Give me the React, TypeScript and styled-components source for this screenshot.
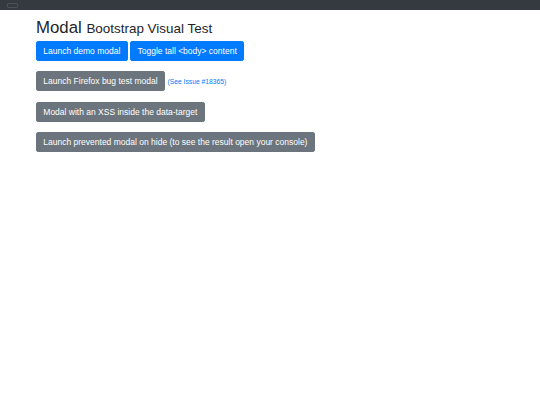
import styled, { createGlobalStyle } from "styled-components";

const GlobalStyle = createGlobalStyle`
  html, body {
    margin: 0;
    padding: 0;
    background: #fff;
  }
  body {
    font-family: "Liberation Sans", Arial, sans-serif;
    color: #212529;
  }
`;

const rows = [
    [
        { label: "Launch demo modal", variant: "primary" },
        { label: "Toggle tall <body> content", variant: "primary" },
    ],
    [{ label: "Launch Firefox bug test modal", variant: "secondary", issue: "(See Issue #18365)" }],
    [{ label: "Modal with an XSS inside the data-target", variant: "secondary" }],
    [{ label: "Launch prevented modal on hide (to see the result open your console)", variant: "secondary" }],
];

export default function App() {
    return (
        <>
            <GlobalStyle />
            <Navbar>
                <Toggler />
            </Navbar>
            <Container>
                <Heading>
                    Modal <Small>Bootstrap Visual Test</Small>
                </Heading>
                <Rows>
                    {rows.map((row, i) => (
                        <Row key={i}>
                            {row.map((b) => (
                                <Button key={b.label} $variant={b.variant}>
                                    {b.label}
                                </Button>
                            ))}
                            {row.map((b) =>
                                "issue" in b && b.issue ? (
                                    <IssueLink key="issue" href="#">
                                        {b.issue}
                                    </IssueLink>
                                ) : null
                            )}
                        </Row>
                    ))}
                </Rows>
            </Container>
        </>
    );
}

const Navbar = styled.div`
  height: 10px;
  background: #343a40;
  padding-left: 7px;
  display: flex;
  align-items: flex-start;
`;

const Toggler = styled.div`
  width: 9px;
  height: 3px;
  margin-top: 3px;
  border: 0.6px solid rgba(255, 255, 255, 0.12);
  border-radius: 1.5px;
`;

const Container = styled.div`
  padding: 8px 36px 0;
`;

const Heading = styled.h2`
  margin: 0;
  height: 20px;
  font-size: 16.8px;
  font-weight: 500;
  line-height: 20px;
`;

const Small = styled.small`
  font-size: 80%;
  font-weight: 400;
`;

const Rows = styled.div`
  margin-top: 3px;
  display: flex;
  flex-direction: column;
  gap: 10.3px;
`;

const Row = styled.div`
  display: flex;
  align-items: center;
  gap: 2.6px;
  height: 20px;
`;

const Button = styled.button<{ $variant: string }>`
  box-sizing: border-box;
  height: 20px;
  font-family: inherit;
  font-size: 8.5px;
  line-height: 12px;
  padding: 0 6.3px;
  border: 0.525px solid ${(p) => (p.$variant === "primary" ? "#007bff" : "#6c757d")};
  border-radius: 2.1px;
  background: ${(p) => (p.$variant === "primary" ? "#007bff" : "#6c757d")};
  color: #fff;
  cursor: pointer;
  white-space: nowrap;
`;

const IssueLink = styled.a`
  font-size: 6.72px;
  color: #007bff;
  text-decoration: none;
`;
